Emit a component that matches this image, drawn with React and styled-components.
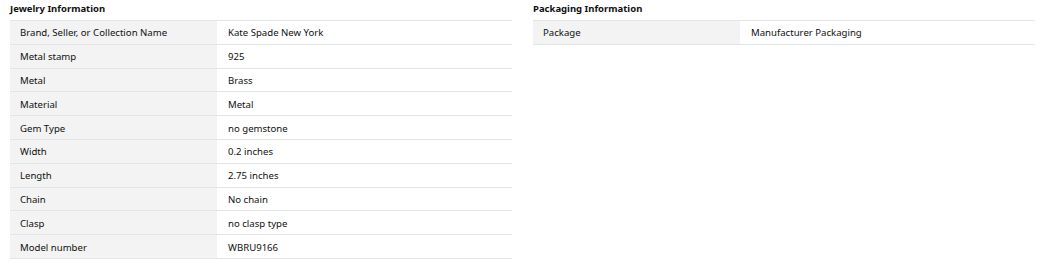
import React from "react";
import styled, { createGlobalStyle } from "styled-components";

const GlobalStyle = createGlobalStyle`
  body {
    margin: 0;
    background: #fff;
    font-family: "Noto Sans", "Open Sans", Arial, sans-serif;
    color: #0f1111;
  }
`;

const Page = styled.div`
  display: flex;
  gap: 21px;
  padding: 2px 10px 0;
`;

const Section = styled.section`
  width: 502px;
`;

const Title = styled.h3`
  margin: 0 0 4px;
  font-size: 9.5px;
  line-height: 14px;
  font-weight: 700;
`;

const Table = styled.table`
  width: 100%;
  border-collapse: collapse;
  font-size: 9.6px;
`;

const Row = styled.tr`
  border-top: 1px solid #e3e6e6;
  &:last-child {
    border-bottom: 1px solid #e3e6e6;
  }
`;

const Label = styled.th`
  width: ${(p) => p.$w}px;
  height: 23.8px;
  padding: 1px 10px 0;
  background: #f3f3f3;
  text-align: left;
  font-weight: 400;
  box-sizing: border-box;
`;

const Value = styled.td`
  height: 23.8px;
  padding: 1px 11px 0;
  box-sizing: border-box;
`;

const jewelry = [
  ["Brand, Seller, or Collection Name", "Kate Spade New York"],
  ["Metal stamp", "925"],
  ["Metal", "Brass"],
  ["Material", "Metal"],
  ["Gem Type", "no gemstone"],
  ["Width", "0.2 inches"],
  ["Length", "2.75 inches"],
  ["Chain", "No chain"],
  ["Clasp", "no clasp type"],
  ["Model number", "WBRU9166"],
];

const packaging = [["Package", "Manufacturer Packaging"]];

function InfoTable({ title, rows, labelWidth }) {
  return (
    <Section>
      <Title>{title}</Title>
      <Table>
        <tbody>
          {rows.map(([k, v]) => (
            <Row key={k}>
              <Label $w={labelWidth}>{k}</Label>
              <Value>{v}</Value>
            </Row>
          ))}
        </tbody>
      </Table>
    </Section>
  );
}

export default function App() {
  return (
    <>
      <GlobalStyle />
      <Page>
        <InfoTable title="Jewelry Information" rows={jewelry} labelWidth={207} />
        <InfoTable title="Packaging Information" rows={packaging} labelWidth={207} />
      </Page>
    </>
  );
}
